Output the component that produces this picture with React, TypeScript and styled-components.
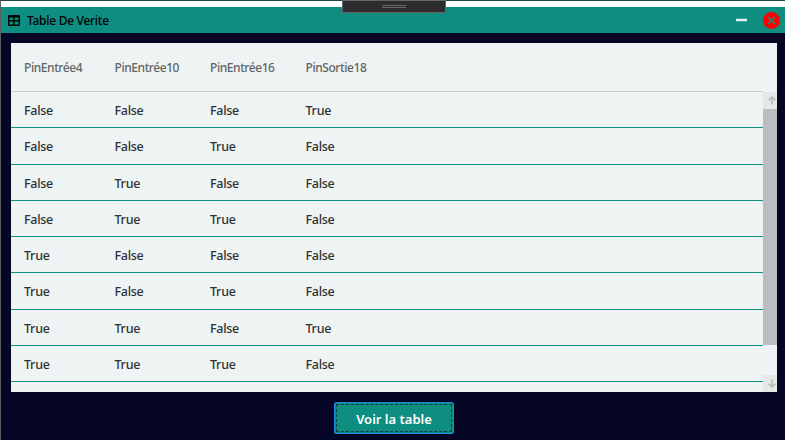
import React from "react";
import styled, { createGlobalStyle } from "styled-components";

const GlobalStyle = createGlobalStyle`
  * { box-sizing: border-box; }
  html, body { margin: 0; padding: 0; overflow: hidden; }
  body { font-family: "Noto Sans", "Open Sans", sans-serif; background: #050525; }
`;

const Screen = styled.div`
  width: 785px;
  height: 440px;
  display: flex;
  flex-direction: column;
  position: relative;
  overflow: hidden;
  background: #050525;
  border-left: 1px solid #5d5d60;
`;

const Backdrop = styled.div`
  flex: none;
  height: 7px;
  background: #fff;
  border-top: 1px solid #244546;
`;

const EdgeShade = styled.div`
  position: absolute;
  left: -1px;
  top: 0;
  width: 1px;
  height: 53px;
  background: linear-gradient(#244546 13px, #1c1c24 13px);
`;

const DockHandle = styled.div`
  position: absolute;
  left: 341px;
  top: 0;
  width: 104px;
  height: 13px;
  background: #2d2d30;
  border: 1px solid #656565;
  display: flex;
  flex-direction: column;
  align-items: center;
  padding-top: 4px;
  gap: 1px;
`;

const Grip = styled.span`
  width: 24px;
  height: 1px;
  background: #686868;
`;

const TitleBar = styled.header`
  flex: none;
  height: 26px;
  background: #0d8e80;
  display: flex;
  align-items: center;
  padding: 0 5px 0 7px;
`;

const Title = styled.h1`
  margin: 0 auto 0 5px;
  padding-top: 2px;
  font-size: 12px;
  font-weight: 500;
  line-height: 24px;
  letter-spacing: -0.28px;
  color: #000;
`;

const WindowButton = styled.button<{ $gap?: number }>`
  display: flex;
  padding: 0;
  border: 0;
  background: none;
  margin-right: ${(p) => p.$gap ?? 0}px;
`;

const Panel = styled.main`
  flex: none;
  width: 766px;
  height: 349px;
  margin: 10px 0 0 10px;
  background: #eef3f4;
  display: flex;
  flex-direction: column;
`;

const columns = "90.5px 95.5px 95.5px 1fr";

const HeaderRow = styled.div`
  flex: none;
  width: 752px;
  height: 49px;
  display: grid;
  grid-template-columns: ${columns};
  padding-left: 13px;
  border-bottom: 1px solid #cacfd0;
  font-size: 12px;
  font-weight: 500;
  line-height: 49px;
  letter-spacing: -0.43px;
  color: #626465;
`;

const Body = styled.div`
  flex: 1;
  min-height: 0;
  display: flex;
`;

const Rows = styled.div`
  width: 752px;
  overflow: hidden;
`;

const Row = styled.div<{ $height: number }>`
  height: ${(p) => p.$height}px;
  display: grid;
  grid-template-columns: ${columns};
  padding-left: 13px;
  border-bottom: 1px solid #0d8e80;
  font-size: 12.5px;
  font-weight: 500;
  line-height: 38px;
  letter-spacing: -0.28px;
  color: #2f3233;
`;

const ScrollBar = styled.div`
  width: 14px;
  display: flex;
  flex-direction: column;
`;

const ScrollButton = styled.div`
  height: 17px;
  background: #e6e8e8;
  display: flex;
  align-items: center;
  padding-left: 5px;
`;

const Thumb = styled.div`
  height: 236px;
  margin-bottom: auto;
  background: #babebe;
`;

const Footer = styled.footer`
  flex: 1;
  padding: 10px 0 0 333px;
`;

const ShowButton = styled.button`
  display: block;
  width: 120px;
  height: 32px;
  padding: 1px;
  border: 1px solid #1e87e5;
  border-radius: 2px;
  background: #0d8e80;
  color: #fff;
  font-family: inherit;
`;

const FocusRing = styled.span`
  display: block;
  height: 28px;
  border: 1px dashed #083f3a;
  font-size: 13px;
  font-weight: 600;
  line-height: 28px;
  letter-spacing: 0;
`;

const TableIcon = () => (
  <svg width="14" height="12" viewBox="0 0 14 12">
    <path
      fillRule="evenodd"
      d="M1.3 1H10.7Q12 1 12 2.3V10.7Q12 12 10.7 12H1.3Q0 12 0 10.7V2.3Q0 1 1.3 1ZM1.4 3.5V6H5.3V3.5ZM6.7 3.5V6H10.6V3.5ZM1.4 7.4V10.4H5.3V7.4ZM6.7 7.4V10.4H10.6V7.4Z"
      fill="#000"
    />
  </svg>
);

const MinimizeIcon = () => (
  <svg width="11" height="12" viewBox="0 0 11 12">
    <path d="M0 6H11" stroke="#e3f0f5" strokeWidth="2.5" />
  </svg>
);

const CloseIcon = () => (
  <svg width="17" height="17" viewBox="0 0 17 17">
    <circle cx="8.5" cy="8.5" r="8.4" fill="#f00" />
    <path d="M5 5L12 12M12 5L5 12" stroke="#387b6c" strokeWidth="1.7" />
  </svg>
);

const Arrow = ({ down }: { down?: boolean }) => (
  <svg width="8" height="9" viewBox="0 0 8 9">
    <path
      d={down ? "M4 0.5V8M0.6 4.6L4 8L7.4 4.6" : "M4 8.5V1M0.6 4.4L4 1L7.4 4.4"}
      fill="none"
      stroke="#b9bcbc"
      strokeWidth="1.6"
    />
  </svg>
);

const pins = ["PinEntrée4", "PinEntrée10", "PinEntrée16", "PinSortie18"];
const values = ["0001", "0010", "0100", "0110", "1000", "1010", "1101", "1110"];
const heights = [36, 37, 36, 36, 36, 37, 36, 36];

export default function App() {
  return (
    <>
      <GlobalStyle />
      <Screen>
        <Backdrop />
        <TitleBar>
          <TableIcon />
          <Title>Table De Verite</Title>
          <WindowButton $gap={16} aria-label="Réduire"><MinimizeIcon /></WindowButton>
          <WindowButton aria-label="Fermer"><CloseIcon /></WindowButton>
        </TitleBar>
        <Panel>
          <HeaderRow>
            {pins.map((pin) => <span key={pin}>{pin}</span>)}
          </HeaderRow>
          <Body>
            <Rows>
              {values.map((bits, i) => (
                <Row key={bits} $height={heights[i]}>
                  {bits.split("").map((bit, j) => (
                    <span key={j}>{bit === "1" ? "True" : "False"}</span>
                  ))}
                </Row>
              ))}
            </Rows>
            <ScrollBar>
              <ScrollButton><Arrow /></ScrollButton>
              <Thumb />
              <ScrollButton><Arrow down /></ScrollButton>
            </ScrollBar>
          </Body>
        </Panel>
        <Footer>
          <ShowButton><FocusRing>Voir la table</FocusRing></ShowButton>
        </Footer>
        <DockHandle><Grip /><Grip /></DockHandle>
        <EdgeShade />
      </Screen>
    </>
  );
}
